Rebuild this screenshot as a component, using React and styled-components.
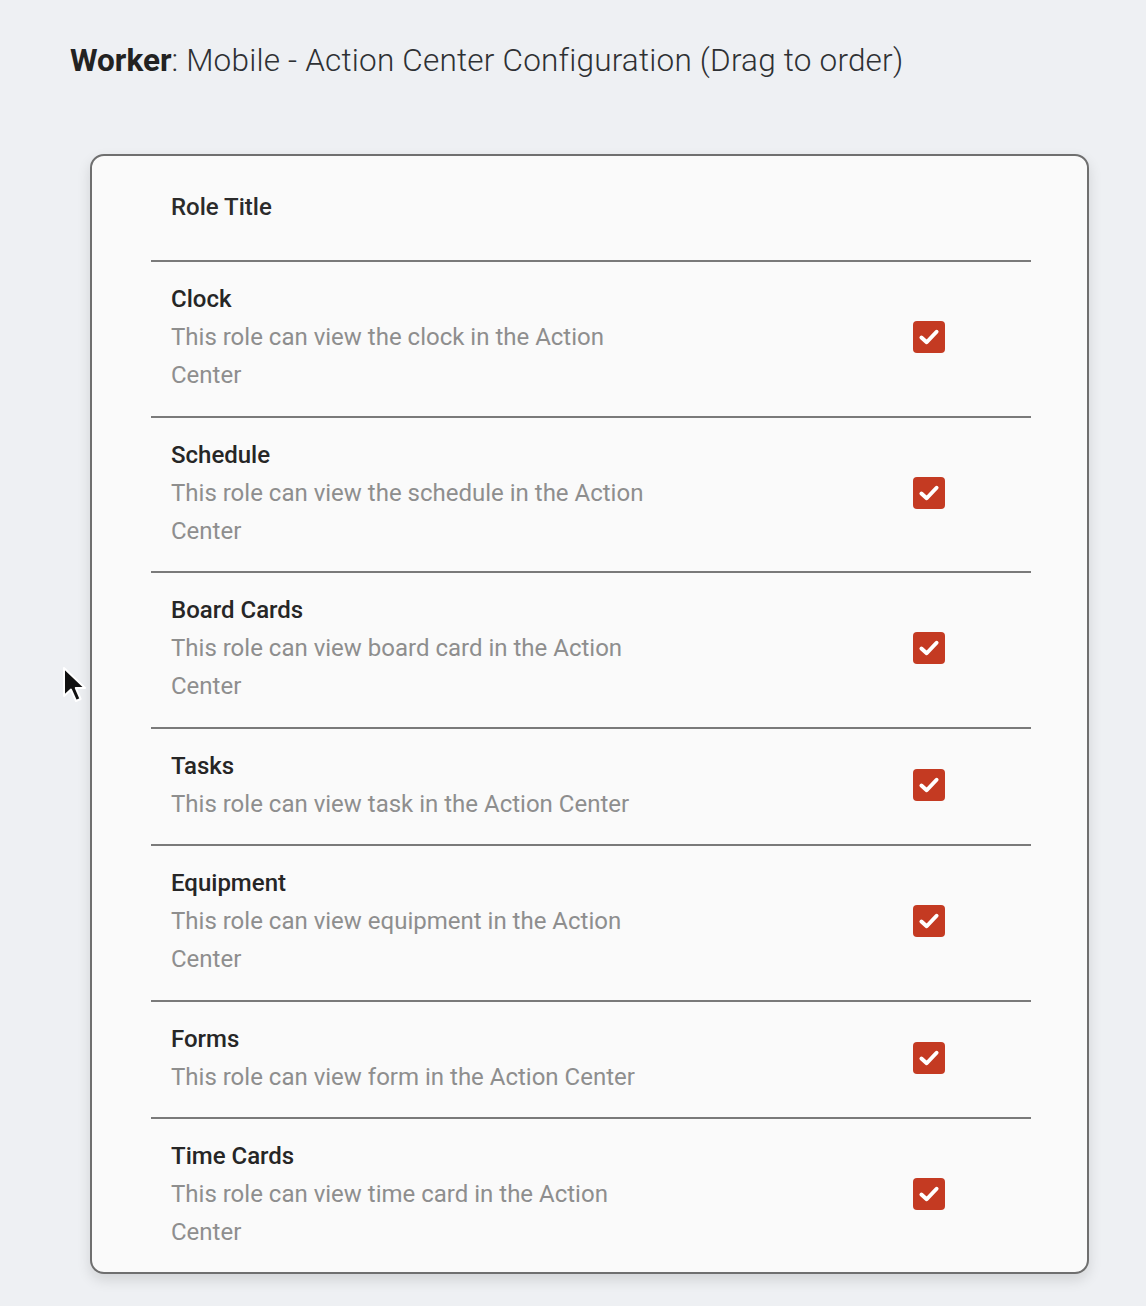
import React from "react";
import styled, { createGlobalStyle } from "styled-components";

const Global = createGlobalStyle`
  html, body { margin: 0; padding: 0; }
  body {
    background: #eef0f3;
    font-family: Roboto, "Noto Sans", "Liberation Sans", sans-serif;
    -webkit-font-smoothing: antialiased;
  }
`;

const Page = styled.div`
  position: relative;
  min-height: 1306px;
  box-sizing: border-box;
  padding: 42px 0 0 70px;
`;

const Heading = styled.h1`
  margin: 0;
  font-size: 31.5px;
  line-height: 38px;
  font-weight: 300;
  color: #2e3134;
  letter-spacing: 0.2px;
  b { font-weight: 700; color: #222; letter-spacing: 0; }
`;

const Card = styled.div`
  margin: 74px 0 0 20px;
  width: 999px;
  height: 1120px;
  box-sizing: border-box;
  border: 2px solid #6f6f6f;
  border-radius: 14px;
  background: #fafafa;
  box-shadow: 0 6px 14px rgba(0, 0, 0, 0.12);
  padding: 0 56px 0 59px;
  overflow: hidden;
`;

const Header = styled.div`
  height: 102px;
  padding: 0 0 2px 20px;
  display: flex;
  align-items: center;
  border-bottom: 2px solid #7a7a7a;
  font-size: 24px;
  font-weight: 500;
  color: #2b2b2b;
`;

const Row = styled.div`
  display: flex;
  align-items: center;
  justify-content: space-between;
  padding: 18px 86px 21.5px 20px;
  border-bottom: 2px solid #7a7a7a;
`;

const Text = styled.div`
  max-width: 490px;
  font-size: 24px;
  line-height: 38px;
`;

const Title = styled.div`
  font-weight: 500;
  color: #262626;
`;

const Desc = styled.div`
  color: #8e8e8e;
  font-weight: 400;
`;

const Check = styled.div`
  width: 32px;
  height: 32px;
  border-radius: 4px;
  background: #c43a22;
  display: flex;
  align-items: center;
  justify-content: center;
  flex: none;
`;

const Cursor = styled.svg`
  position: absolute;
  left: 62px;
  top: 666px;
`;

const rows = [
  ["Clock", "This role can view the clock in the Action Center"],
  ["Schedule", "This role can view the schedule in the Action Center"],
  ["Board Cards", "This role can view board card in the Action Center"],
  ["Tasks", "This role can view task in the Action Center"],
  ["Equipment", "This role can view equipment in the Action Center"],
  ["Forms", "This role can view form in the Action Center"],
  ["Time Cards", "This role can view time card in the Action Center"],
];

export default function App() {
  return (
    <>
      <Global />
      <Page>
        <Heading>
          <b>Worker</b>: Mobile - Action Center Configuration (Drag to order)
        </Heading>
        <Card>
          <Header>Role Title</Header>
          {rows.map(([t, d]) => (
            <Row key={t}>
              <Text>
                <Title>{t}</Title>
                <Desc>{d}</Desc>
              </Text>
              <Check>
                <svg width="28" height="28" viewBox="0 0 24 24">
                  <path
                    d="M5.5 12.5 L10 16.5 L18.5 7.5"
                    fill="none"
                    stroke="#fff"
                    strokeWidth="3.4"
                    strokeLinecap="round"
                    strokeLinejoin="round"
                  />
                </svg>
              </Check>
            </Row>
          ))}
        </Card>
        <Cursor width="26" height="38" viewBox="0 0 13 19">
          <path
            d="M1 1 L1 15 L4.5 11.8 L7 17.5 L9.3 16.5 L6.9 11 L11.5 11 Z"
            fill="#111"
            stroke="#fff"
            strokeWidth="1"
            strokeLinejoin="round"
          />
        </Cursor>
      </Page>
    </>
  );
}
